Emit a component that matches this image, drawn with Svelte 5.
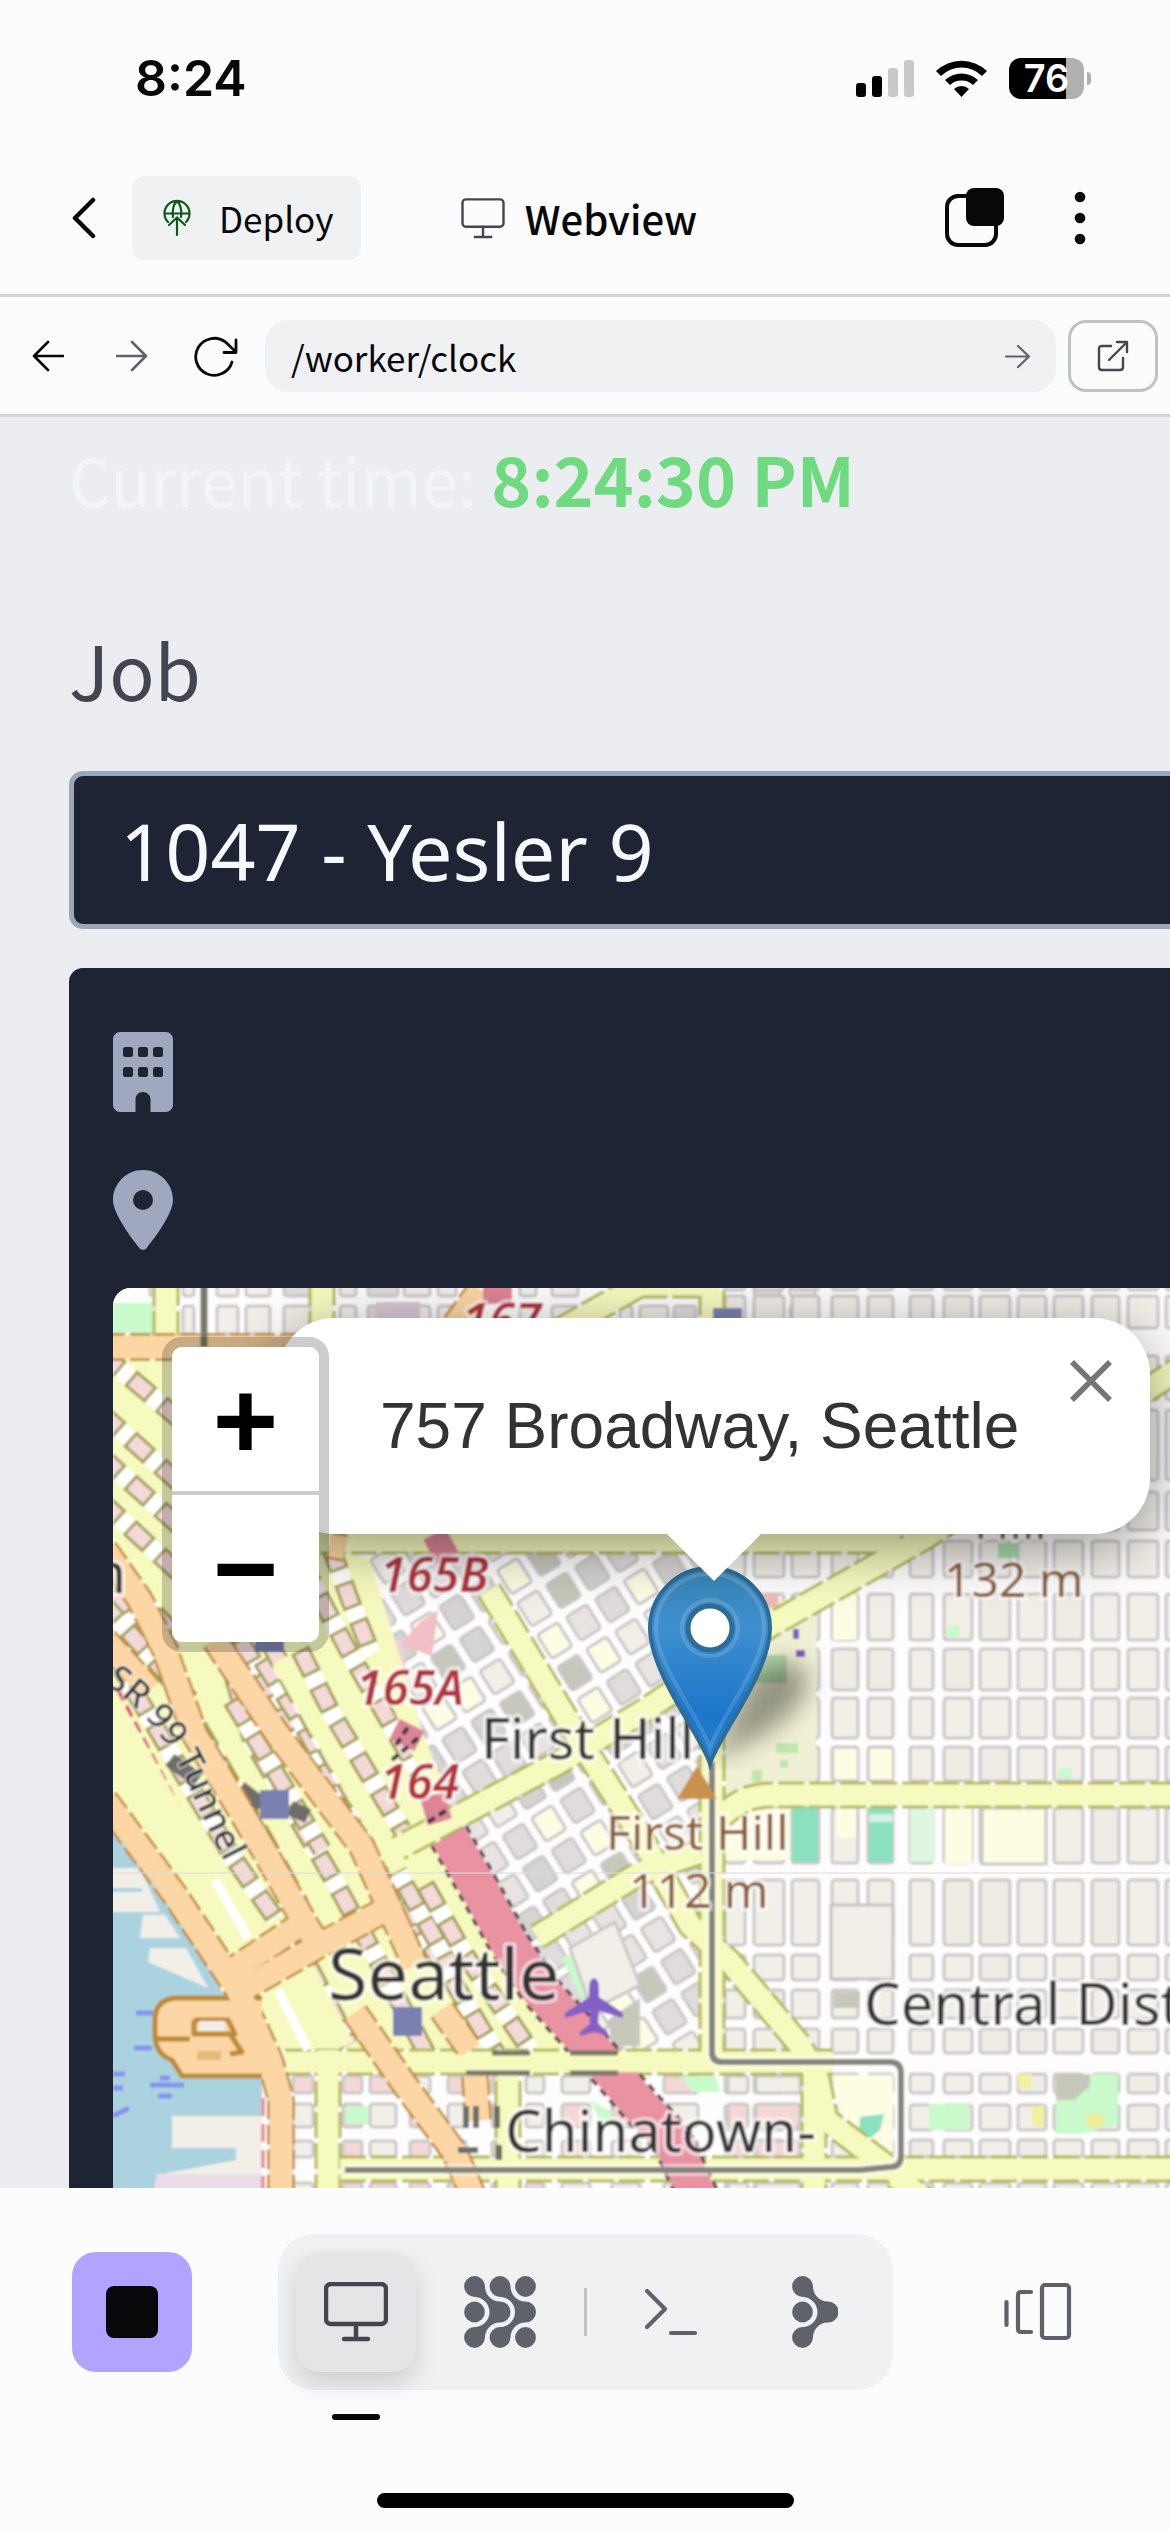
<script>
  let path = $state('/worker/clock');
  let job = $state('1047 - Yesler 9');

  let seed = 7;
  const rnd = () => {
    seed = (seed * 16807) % 2147483647;
    return seed / 2147483647;
  };

  const blockFills = ['#f2efe9', '#f2efe9', '#f2efe9', '#f2efe9', '#efebe5', '#e0dcdc'];

  // Street blocks of the eastern grid: columns and rows as [start, end].
  const cols = [
    [725, 745], [754, 784], [792, 819], [832, 858], [868, 893], [910, 933], [944, 972],
    [980, 1010], [1018, 1046], [1054, 1083], [1092, 1119], [1128, 1158], [1166, 1196]
  ];
  const rows = [
    [1276, 1290], [1296, 1328], [1356, 1400], [1410, 1480], [1492, 1530], [1541, 1577],
    [1594, 1640], [1649, 1690], [1698, 1738], [1747, 1781], [1808, 1863], [1880, 1945],
    [1955, 1980], [1990, 2018], [2029, 2053], [2074, 2093], [2105, 2130], [2140, 2157], [2183, 2200]
  ];
  const east = cols.flatMap(([x1, x2]) =>
    rows.map(([y1, y2]) => ({ x: x1, y: y1, w: x2 - x1, h: y2 - y1, fill: blockFills[Math.floor(rnd() * 5)] }))
  );

  const topCols = [[150, 156], [183, 194], [217, 238], [246, 270], [284, 312], [340, 356], [368, 398], [404, 430], [438, 456], [520, 536], [552, 578], [620, 632], [640, 668], [674, 696], [754, 780], [790, 815]];
  const northWest = topCols.flatMap(([x1, x2]) =>
    [[1280, 1296], [1306, 1334]].map(([y1, y2]) => ({ x: x1, y: y1, w: x2 - x1, h: y2 - y1, fill: blockFills[Math.floor(rnd() * 6)] }))
  );

  const southCols = [[293, 313], [343, 362], [370, 396], [410, 430], [448, 466], [492, 506], [526, 544], [562, 590], [612, 640], [664, 698], [728, 748], [756, 800]];
  const southWest = southCols.flatMap(([x1, x2]) =>
    [[2076, 2093], [2104, 2127], [2141, 2157], [2183, 2200]].map(([y1, y2]) => ({
      x: x1, y: y1, w: x2 - x1, h: y2 - y1, fill: rnd() > 0.55 ? '#f4d7d7' : '#f2efe9'
    }))
  );

  // First Hill blocks, turned to follow the diagonal streets.
  const hill = [];
  for (let i = -9; i < 14; i++) {
    for (let j = -13; j < 14; j++) {
      hill.push({ x: i * 34, y: j * 38, w: 24, h: 28, fill: ['#f2efe9', '#e0dcdc', '#e0dcdc', '#d6d3d3', '#e9e4e1', '#fdfde4', '#c8c7bb'][Math.floor(rnd() * 7)] });
    }
  }

  // Rows of small downtown blocks between the avenues.
  const lanes = [
    'M113 1590 L176 1690 L262 1836 L300 1905',
    'M113 1655 L230 1853 L275 1918',
    'M200 1560 L252 1740 L336 1884 L372 1950 L430 2060',
    'M225 1560 L240 1640 L386 1880 L440 1960 L500 2060',
    'M262 1660 L300 1720 L362 1830 L420 1925',
    'M300 1650 L330 1710 L402 1830',
    'M300 1560 L348 1650 L420 1775',
    'M330 1545 L350 1600 L372 1655',
    'M268 1640 L322 1740 L402 1880 L450 1965',
    'M232 1700 L322 1850',
    'M308 1965 L350 2045',
    'M425 1885 L462 1950 L530 2050'
  ];
  const lanesNorth = [
    'M100 1352 L180 1420', 'M100 1412 L180 1484', 'M100 1455 L180 1527',
    'M100 1500 L180 1574', 'M100 1555 L180 1640', 'M100 1600 L190 1700'
  ];
  const yellow = [
    'M380 1858 L400 1847 L558 1763 L650 1707 L771 1625 L926 1537 L1180 1368',
    'M489 1590 L582 1744 L640 1835 L690 1925 L730 1962 L800 2045 L818 2080 L826 2120 L900 2176',
    'M320 1541 H900',
    'M712 1290 V2062',
    'M537 1937 L640 1873 L700 1852',
    'M285 2062 H833',
    'M722 1816 C740 1800 750 1795 775 1795 H1180',
    'M340 2169 H1180',
    'M328 2050 V2200',
    'M508 2050 V2200',
    'M814 2060 V2200',
    'M895 2176 L925 2200',
    'M322 1280 V1340',
    'M166 1280 V1345',
    'M560 1330 L640 1285 H720'
  ];
  const orange = [
    'M105 1347 H300',
    'M105 1550 L140 1600 L165 1650 L195 1735 L262 1847 L306 1925 L318 1945',
    'M105 1640 L150 1690',
    'M215 1640 L278 1735 L362 1847 L415 1965',
    'M105 1800 L175 1895 L238 1990 L270 2060 L281 2100 V2200',
    'M225 1975 L300 1925',
    'M236 1993 L320 1945 L385 1910',
    'M355 2013 L405 2085 L455 2153 L475 2200',
    'M442 2010 L470 2050',
    'M475 2076 L478 2120',
    'M330 1545 L345 1548',
    'M455 1325 L480 1290'
  ];
  const motorway = ['M449 1836 L477 1885 L510 1945 L540 1990 L580 2035 L640 2105 L672 2140 L700 2200'];
  const motorwayBits = ['M424 1812 L448 1805', 'M402 1745 L412 1725', 'M497 1270 V1304', 'M430 1552 L452 1540'];

  const dots = [[10.5, 10.5], [36, 10.5], [61.5, 10.5], [10.5, 36], [10.5, 61.5], [36, 61.5], [61.5, 61.5]];
</script>

{#snippet blocks(list)}
  {#each list as b}
    <rect x={b.x} y={b.y} width={b.w} height={b.h} rx="3" fill={b.fill} />
  {/each}
{/snippet}

{#snippet monitor()}
  <rect x="2" y="2" width="60" height="40" rx="5" />
  <path d="M32 42v15M20 57h24" />
{/snippet}

<div class="phone">
  <header>
    <div class="status">
      <span class="clock">8:24</span>
      <div class="signals">
        <svg width="58" height="37" viewBox="0 0 58 37" aria-hidden="true">
          <rect x="0" y="23" width="10" height="14" rx="3" />
          <rect x="16" y="16" width="10" height="21" rx="3" />
          <rect x="32" y="8" width="10" height="29" rx="3" fill="#c9c9c9" />
          <rect x="48" y="0" width="10" height="37" rx="3" fill="#c9c9c9" />
        </svg>
        <svg width="51" height="37" viewBox="0 0 51 37" aria-hidden="true">
          <path d="M0 11A37 37 0 0 1 51 11L46 16A29 29 0 0 0 5 16Z" />
          <path d="M9 20A24 24 0 0 1 42 20L37 25A17 17 0 0 0 14 25Z" />
          <path d="M18 29A11 11 0 0 1 33 29L25.500 37Z" />
        </svg>
        <div class="battery"><span>76</span></div>
      </div>
    </div>

    <div class="titlebar">
      <div class="side">
        <button class="icon back" aria-label="Back">
          <svg width="24" height="42" viewBox="0 0 24 42" fill="none" stroke="#07080a" stroke-width="4.500" stroke-linecap="round" stroke-linejoin="round"><path d="M21 3L3 21L21 39" /></svg>
        </button>
        <button class="deploy">
          <svg width="28" height="38" viewBox="0 0 28 38" fill="none" stroke="#0a5a16" stroke-width="2.200" stroke-linecap="round" stroke-linejoin="round">
            <path d="M5 23A12.500 12.500 0 1 1 23 23M1.500 14.500H26.500M10 18C9 11 11 5 14 2C17 5 19 11 18 18M14 36V19M6 26L14 18.500L22 26" />
          </svg>
          Deploy
        </button>
      </div>
      <h1>
        <svg width="44" height="41" viewBox="0 0 64 60" fill="none" stroke="#434650" stroke-width="3.500" stroke-linecap="round">{@render monitor()}</svg>
        Webview
      </h1>
      <div class="side end">
        <button class="icon" aria-label="Tabs">
          <svg width="60" height="60" viewBox="0 0 60 60"><rect x="2" y="8" width="49" height="49" rx="11" fill="none" stroke="#07080a" stroke-width="4" /><rect x="21" y="0" width="38" height="38" rx="8" fill="#07080a" /></svg>
        </button>
        <button class="icon" aria-label="More">
          <svg width="12" height="54" viewBox="0 0 12 54" fill="#07080a"><circle cx="6" cy="6" r="5.300" /><circle cx="6" cy="27" r="5.300" /><circle cx="6" cy="48" r="5.300" /></svg>
        </button>
      </div>
    </div>
  </header>

  <nav class="address">
    <button class="icon nav" aria-label="Go back">
      <svg width="32" height="32" viewBox="0 0 32 32" fill="none" stroke="#07080a" stroke-width="2.600" stroke-linecap="round" stroke-linejoin="round"><path d="M31 16H2M16 2L2 16L16 30" /></svg>
    </button>
    <button class="icon nav" aria-label="Go forward">
      <svg width="32" height="32" viewBox="0 0 32 32" fill="none" stroke="#5f626b" stroke-width="2.600" stroke-linecap="round" stroke-linejoin="round"><path d="M1 16H30M16 2L30 16L16 30" /></svg>
    </button>
    <button class="icon nav" aria-label="Reload">
      <svg width="46" height="42" viewBox="0 0 46 42" fill="none" stroke="#07080a" stroke-width="2.800" stroke-linecap="round" stroke-linejoin="round"><path d="M39 27A18.500 18.500 0 1 1 33 7.500L43 17M43 5V17.500H31" /></svg>
    </button>
    <div class="field">
      <input aria-label="Address" bind:value={path} />
      <button class="icon" aria-label="Go">
        <svg width="25" height="25" viewBox="0 0 25 25" fill="none" stroke="#5f626b" stroke-width="2.200" stroke-linecap="round" stroke-linejoin="round"><path d="M1 12.500H24M13 2L24 12.500L13 23" /></svg>
      </button>
    </div>
    <button class="external" aria-label="Open in new tab">
      <svg width="32" height="32" viewBox="0 0 32 32" fill="none" stroke="#434650" stroke-width="2.400" stroke-linecap="round" stroke-linejoin="round"><path d="M14 6H5Q2 6 2 9V27Q2 30 5 30H23Q26 30 26 27V18M12 20L30 2M20 2H30V12" /></svg>
    </button>
  </nav>

  <main>
    <p class="now">Current time: <strong>8:24:30 PM</strong></p>
    <label for="job">Job</label>
    <select id="job" bind:value={job}>
      <option>1047 - Yesler 9</option>
    </select>

    <section class="card">
      <svg class="detail" width="60" height="80" viewBox="0 0 384 512" fill="#9fa8bf" aria-hidden="true">
        <path fill-rule="evenodd" d="M48 0C21 0 0 21 0 48V464c0 27 21 48 48 48h96V432c0-27 21-48 48-48s48 21 48 48v80h96c27 0 48-21 48-48V48c0-27-21-48-48-48zM80 96h32q16 0 16 16v32q0 16-16 16H80q-16 0-16-16v-32q0-16 16-16zm96 0h32q16 0 16 16v32q0 16-16 16h-32q-16 0-16-16v-32q0-16 16-16zm96 0h32q16 0 16 16v32q0 16-16 16h-32q-16 0-16-16v-32q0-16 16-16zM80 224h32q16 0 16 16v32q0 16-16 16H80q-16 0-16-16v-32q0-16 16-16zm96 0h32q16 0 16 16v32q0 16-16 16h-32q-16 0-16-16v-32q0-16 16-16zm96 0h32q16 0 16 16v32q0 16-16 16h-32q-16 0-16-16v-32q0-16 16-16z" />
      </svg>
      <svg class="detail" width="60" height="80" viewBox="0 0 384 512" fill="#9fa8bf" aria-hidden="true">
        <path fill-rule="evenodd" d="M215.700 499.200C267 435 384 279.400 384 192C384 86 298 0 192 0S0 86 0 192c0 87.400 117 243 168.300 307.200c12.300 15.300 35.100 15.300 47.400 0zM192 128a64 64 0 1 1 0 128 64 64 0 1 1 0-128z" />
      </svg>

      <div class="map">
        <svg class="tiles" viewBox="113 1288 1057 900" preserveAspectRatio="xMinYMin slice" role="img" aria-label="Street map of Seattle">
          <defs>
            <clipPath id="hill"><path d="M330 1545H700V2050H600L430 1790L350 1600Z" /></clipPath>
            <clipPath id="downtown"><path d="M113 1340H330V1545L370 1560L450 1820L590 2050H280L113 1800Z" /></clipPath>
            <path id="tunnel" d="M104 1684C140 1706 168 1740 184 1776S214 1842 240 1892" />
            <filter id="tile" x="0" y="0" width="100%" height="100%"><feGaussianBlur stdDeviation="1.300" /></filter>
          </defs>
          <g filter="url(#tile)">
          <rect x="93" y="1268" width="1097" height="940" fill="#fdfdfd" />

          <g stroke="#cbc7c8" stroke-width="3">{@render blocks(northWest)}</g>
          <rect x="113" y="1303" width="40" height="30" fill="#c8facc" />
          <rect x="376" y="1302" width="44" height="30" fill="#d8c8d4" />
          <g stroke="#cbc7c8" stroke-width="3">{@render blocks(east)}</g>

          <g stroke="none">
            <path d="M725 1600H816V1783H760L725 1800Z" fill="#f0f0d4" />
            <path d="M755 1655h32v28h-32z" fill="#b9dcaa" />
            <path d="M776 1743h22v10h-22zM752 1770h10v12h-10zM780 1760h8v8h-8z" fill="#c0e6a8" />
            <rect x="793" y="1629" width="6" height="10" fill="#7f5cc0" />
            <rect x="796" y="1650" width="9" height="7" fill="#7f5cc0" />
            <rect x="722" y="1808" width="68" height="52" fill="#fdfde4" />
            <rect x="792" y="1806" width="26" height="56" fill="#8ae0bf" />
            <rect x="869" y="1806" width="24" height="56" fill="#8ae0bf" />
            <rect x="869" y="1814" width="24" height="8" fill="#d2f3e5" />
            <rect x="910" y="1806" width="24" height="56" fill="#dff6df" />
            <rect x="836" y="1808" width="20" height="30" fill="#fdfde4" />
            <rect x="945" y="1808" width="27" height="56" fill="#fdfde4" />
            <rect x="982" y="1808" width="64" height="56" fill="#fdfde4" stroke="#cbc7c8" stroke-width="3" />
            <rect x="833" y="1594" width="24" height="46" fill="#fdfde4" />
            <rect x="835" y="1749" width="22" height="30" fill="#fdfde4" />
            <rect x="870" y="1749" width="22" height="30" fill="#fdfde4" />
            <rect x="831" y="1905" width="62" height="74" fill="#f2efe9" stroke="#c6c1c2" stroke-width="3" />
            <path d="M832 2075H893V2162L850 2130L835 2100Z" fill="#fdfde4" />
            <path d="M860 2117L884 2114L880 2130L870 2138L859 2134Z" fill="#8ae0bf" />
            <rect x="929" y="2104" width="40" height="26" fill="#c8facc" />
            <path d="M1056 2074H1118V2124L1082 2134H1056Z" fill="#c8facc" />
            <path d="M1056 2074H1090V2086L1074 2100H1056Z" fill="#c8c7bb" />
            <rect x="1086" y="2114" width="18" height="13" fill="#eeee9a" />
            <rect x="1018" y="2074" width="13" height="14" fill="#f2f29c" />
            <rect x="1032" y="2106" width="12" height="20" fill="#f2f29c" />
            <rect x="947" y="1626" width="13" height="12" fill="#c8facc" />
            <rect x="998" y="1543" width="20" height="15" fill="#a9dcae" />
            <rect x="1058" y="1768" width="14" height="11" fill="#c8facc" />
            <rect x="834" y="1992" width="26" height="16" fill="#c8c7bb" />
            <rect x="762" y="1594" width="16" height="14" fill="#f0b9b4" />
            <rect x="678" y="1550" width="26" height="18" fill="#dfa9a4" />
          </g>

          <g clip-path="url(#hill)">
            <rect x="330" y="1540" width="390" height="520" fill="#fdfdfd" />
            <g transform="translate(560 1800) rotate(-32)" stroke="#cbc7c8" stroke-width="3">{@render blocks(hill)}</g>
          </g>
          <path d="M420 1622L438 1610L432 1656L400 1645Z" fill="#f1bfc6" />
          <path d="M375 1645L400 1640L408 1675L385 1680Z" fill="#f4d0d4" />

          <path d="M93 1770L262 2060V2210H93Z" fill="#aad3df" />
          <path d="M93 1868H140L160 1912H93ZM143 1915H165L180 1938H140ZM150 1948H186L208 1988L148 1962ZM172 2116H262V2210H157V2175L236 2160V2148H172Z" fill="#f2efe9" />
          <path d="M157 2174H262V2210H150Z" fill="#ebdbe8" />
          <path d="M93 1888H142V1892H93Z" fill="#aad3df" />
          <path d="M136 2013h18M134 2048h18M150 2085h34M158 2096h14M113 2074h12M113 2088h10M113 2116l16-8M160 2078h10" stroke="#8693ee" stroke-width="5" fill="none" />

          <g clip-path="url(#downtown)" fill="none">
            <path d="M105 1330H330V1545L370 1560L450 1820L590 2060H280L105 1800Z" fill="#f7fabf" />
            {#each [...lanes, ...lanesNorth] as d}
              <path {d} stroke="#fff" stroke-width="18" />
              <path {d} stroke="#a0a052" stroke-width="20" stroke-dasharray="27 13" />
              <path {d} stroke="#f4d9d9" stroke-width="14" stroke-dasharray="21 19" stroke-dashoffset="-3" />
            {/each}
            <path d="M118 1690L170 1790L212 1878" stroke="#e0417a" stroke-width="4" stroke-dasharray="12 6" />
            <path d="M170 1760L198 1780M240 1788L262 1805M290 1808L308 1816" stroke="#6d6d6a" stroke-width="15" />
          </g>

          <g stroke="#cbc7c8" stroke-width="3">{@render blocks(southWest)}</g>
          <rect x="346" y="2106" width="22" height="18" fill="#c8facc" />
          <path d="M680 2076H716L720 2092H692Z" fill="#c8facc" />
          <path d="M562 1958L578 1950L592 1985L582 2000Z" fill="#c8facc" />
          <path d="M590 2100L612 2112L616 2130L600 2120Z" fill="#c8facc" />
          <path d="M608 2020L640 1998V2046H612Z" fill="#c8c7bb" />
          <path d="M570 1948L615 1922L640 1985L592 2010Z" fill="#f2efe9" stroke="#cbc7c8" stroke-width="3" />

          <g fill="none" stroke-linejoin="round">
            {#each yellow as d}<path {d} stroke="#b3b75c" stroke-width="27" stroke-dasharray="26 5" />{/each}
            {#each yellow as d}<path {d} stroke="#f7fabf" stroke-width="21" />{/each}
            <path d="M105 1690L250 1950M300 1960L345 2045M280 1660L400 1870M380 1650L440 1800" stroke="#f7fabf" stroke-width="18" />
            <path d="M278 1990L308 2050M215 1880L248 1938" stroke="#fff" stroke-width="9" />

            {#each orange as d}<path {d} stroke="#bd8a35" stroke-width="28" stroke-dasharray="20 5" />{/each}
            <path d="M262 1998H175Q155 2000 155 2020V2032Q154 2054 172 2060L182 2076H262" fill="#fcd6a4" stroke="#bd8a35" stroke-width="5" />
            {#each orange as d}<path {d} stroke="#fcd6a4" stroke-width="23" />{/each}
            <path d="M194 2020H228L236 2036M194 2020V2034H230L242 2052L230 2054M155 2039H190" stroke="#bd8a35" stroke-width="5" />
            <rect x="199" y="2021" width="26" height="10" fill="#f2efe9" />
            <rect x="197" y="2051" width="24" height="9" fill="#e3bb79" />
            <path d="M263 2098V2190" stroke="#e892a2" stroke-width="4" stroke-dasharray="18 8" />

            {#each motorway as d}
              <path {d} stroke="#4a3a3e" stroke-width="43" stroke-dasharray="8 6" />
              <path {d} stroke="#e892a2" stroke-width="37" />
            {/each}
            {#each motorwayBits as d}<path {d} stroke="#dd8496" stroke-width="28" />{/each}
            <path d="M483 1287H512" stroke="#dd8496" stroke-width="30" />
            <path d="M392 1760L418 1738M428 1822L450 1808M396 1745L410 1724" stroke="#333" stroke-width="4" stroke-dasharray="8 5" />
            <path d="M520 2062H640" stroke="#f7fabf" stroke-width="20" />
            <path d="M492 2053H530M570 2053H618M466 2073H530M570 2073H618" stroke="#77776a" stroke-width="5" />
            <path d="M466 2106V2128M476 2106V2128M458 2150H478M497 2106V2128M499 2145V2160" stroke="#6d6d6a" stroke-width="6" />
            <path d="M204 1278V1347" stroke="#77776a" stroke-width="7" />
            <path d="M712 1762V2052Q712 2062 722 2062H890Q901 2062 901 2073V2156Q901 2167 890 2167L860 2170H345" stroke="#fff" stroke-opacity=".5" stroke-width="12" />
            <path d="M712 1762V2052Q712 2062 722 2062H890Q901 2062 901 2073V2156Q901 2167 890 2167L860 2170H345" stroke="#84847b" stroke-width="6" />
          </g>

          <g fill="#7a80b0">
            <rect x="260" y="1790" width="29" height="29" />
            <rect x="393" y="2007" width="29" height="29" />
            <rect x="255" y="1623" width="29" height="29" />
            <rect x="713" y="1308" width="29" height="29" />
          </g>
          <path d="M697 1766L717 1799H677Z" fill="#c8914d" />
          <path d="M594 1978Q599 1979 599 1990V1997L623 2013V2018L599 2011L598 2024L608 2032V2036L594 2032L580 2036V2032L590 2024L589 2011L565 2018V2013L589 1997V1990Q589 1979 594 1978Z" fill="#8461c4" />

          <g class="labels">
            <text x="328" y="2000" font-size="72">Seattle</text>
            <text x="505" y="2152" font-size="58">Chinatown-</text>
            <text x="864" y="2025" font-size="58">Central District</text>
            <text x="481" y="1759" font-size="56">First Hill</text>
            <text x="126" y="1593" font-size="56" text-anchor="end">n</text>
            <text class="road" font-size="36"><textPath href="#tunnel">SR 99 Tunnel</textPath></text>
            <g class="peak" font-size="48">
              <text x="606" y="1850">First Hill</text>
              <text x="629" y="1908">112 m</text>
              <text x="944" y="1597">132 m</text>
              <text x="974" y="1539">Hill</text>
            </g>
            <g class="exit" font-size="48">
              <text x="380" y="1592">165B</text>
              <text x="356" y="1705">165A</text>
              <text x="380" y="1799">164</text>
              <text x="462" y="1338">167</text>
            </g>
          </g>
          </g>
          <path d="M113 1873H1170" stroke="#dcdcdc" stroke-width="1" />
        </svg>

        <svg class="marker" width="230" height="204" viewBox="0 0 230 204" aria-hidden="true">
          <defs>
            <linearGradient id="pin" x1="0" y1="0" x2="0" y2="1"><stop offset="0" stop-color="#3b86b8" /><stop offset=".3" stop-color="#3e8fce" /><stop offset=".75" stop-color="#1c76c9" /><stop offset="1" stop-color="#2a81cb" /></linearGradient>
            <filter id="soft" x="-30%" y="-30%" width="160%" height="160%"><feGaussianBlur stdDeviation="12" /></filter>
          </defs>
          <path d="M64 196L100 116Q130 84 158 104Q166 134 122 164Z" fill="#000" opacity=".38" filter="url(#soft)" />
          <path d="M62 198C55 172 2 108 2 62A60 60 0 0 1 122 62C122 108 69 172 62 198Z" fill="url(#pin)" stroke="#2e6c97" stroke-width="4" />
          <path d="M62 182C52 152 8 98 8 62A54 54 0 0 1 116 62C116 98 72 152 62 182Z" fill="none" stroke="#fff" stroke-opacity=".14" stroke-width="4" />
          <circle cx="62" cy="62" r="28" fill="none" stroke="#fff" stroke-opacity=".14" stroke-width="4" />
          <circle cx="62" cy="62" r="22" fill="#fff" stroke="#2e6c97" stroke-width="5" />
        </svg>

        <div class="popup">
          <p>757 Broadway, Seattle</p>
          <button class="icon close" aria-label="Close popup">
            <svg width="44" height="44" viewBox="0 0 44 44" stroke="#757575" stroke-width="5.500"><path d="M3 3L41 41M41 3L3 41" /></svg>
          </button>
          <svg class="tip" width="104" height="52" viewBox="0 0 104 52" aria-hidden="true"><path d="M0 0H104L52 52Z" fill="#fff" /></svg>
        </div>

        <div class="zoom">
          <button aria-label="Zoom in">+</button>
          <button aria-label="Zoom out">−</button>
        </div>
      </div>
    </section>
  </main>

  <footer>
    <div class="dock">
      <button class="stop" aria-label="Stop"><span></span></button>
      <div class="tools">
        <button class="active" aria-label="Webview">
          <svg width="64" height="60" viewBox="0 0 64 60" fill="none" stroke="#434650" stroke-width="4.500" stroke-linecap="round">{@render monitor()}</svg>
        </button>
        <button aria-label="Apps">
          <svg width="72" height="72" viewBox="0 0 72 72" fill="#5f626b">
            {#each dots as [x, y]}<circle cx={x} cy={y} r="10.400" />{/each}
            <path d="M20.900 10C20.900 18 27 25.500 36 25.500A10.500 10.500 0 0 1 36 46.500C27 46.500 20.900 54 20.900 62L10.500 51.100C18 51.100 25.500 45 25.500 36S18 20.900 10.500 20.900Z" />
            <path d="M46.400 10C46.400 18 52.500 25.500 61.500 25.500A10.500 10.500 0 0 1 61.500 46.500C52.500 46.500 46.400 54 46.400 62L36 51.100C43.500 51.100 51 45 51 36S43.500 20.900 36 20.900Z" />
          </svg>
        </button>
        <span class="rule"></span>
        <button aria-label="Shell">
          <svg width="54" height="50" viewBox="0 0 54 50" fill="none" stroke="#5f626b" stroke-width="4.200" stroke-linecap="round" stroke-linejoin="round"><path d="M3 4L21 22L3 40M27 46H51" /></svg>
        </button>
        <button aria-label="Assistant">
          <svg width="46" height="72" viewBox="0 0 46 72" fill="#5f626b">
            <circle cx="10.500" cy="10.500" r="10.400" /><circle cx="10.500" cy="36" r="10.400" /><circle cx="10.500" cy="61.500" r="10.400" />
            <path d="M20.900 10C20.900 18 27 25.500 36 25.500A10.500 10.500 0 0 1 36 46.500C27 46.500 20.900 54 20.900 62L10.500 51.100C18 51.100 25.500 45 25.500 36S18 20.900 10.500 20.900Z" />
          </svg>
        </button>
      </div>
      <button class="icon panes" aria-label="Panes">
        <svg width="68" height="60" viewBox="0 0 68 60" fill="none" stroke="#5f626b" stroke-width="4.200" stroke-linecap="round" stroke-linejoin="round"><rect x="38" y="3" width="27" height="53" rx="3" /><path d="M27 10H17Q14 10 14 13V47Q14 50 17 50H27M2.500 20V43" /></svg>
      </button>
    </div>
    <div class="home"></div>
  </footer>
</div>

<style>
  :global(body) { background: #fcfcfc; }
  .phone {
    display: flex;
    flex-direction: column;
    min-height: 100vh;
    overflow: hidden;
    background: #fcfcfc;
    color: #07080a;
    font-family: 'Noto Sans CJK JP', 'Noto Sans', sans-serif;
  }
  button { border: 0; padding: 0; background: none; font: inherit; color: inherit; cursor: pointer; }
  svg { display: block; flex: none; }
  p, h1 { margin: 0; }
  .icon { display: flex; align-items: center; justify-content: center; }

  header { border-bottom: 3px solid #d3d5d8; }
  .status {
    display: flex;
    justify-content: space-between;
    align-items: center;
    height: 156px;
    padding: 0 86px 0 135px;
    font-family: Inter, sans-serif;
  }
  .clock { font-size: 50px; font-weight: 600; }
  .signals { display: flex; align-items: center; gap: 22px; }
  .battery {
    position: relative;
    display: flex;
    align-items: center;
    justify-content: center;
    width: 75px;
    height: 41px;
    border-radius: 12px;
    background: linear-gradient(90deg, #000 57px, #b0b0b0 57px);
    color: #fff;
    font-size: 38px;
    font-weight: 600;
    line-height: 41px;
  }
  .battery::after {
    content: '';
    position: absolute;
    right: -7px;
    top: 14px;
    width: 4px;
    height: 13px;
    border-radius: 0 6px 6px 0;
    background: #b0b0b0;
  }
  .titlebar {
    display: grid;
    grid-template-columns: 1fr auto 1fr;
    align-items: center;
    padding: 20px 84px 34px 72px;
  }
  .side { display: flex; align-items: center; gap: 36px; }
  .end { justify-content: flex-end; gap: 69px; }
  .end .icon { height: 60px; }
  .deploy {
    display: flex;
    align-items: center;
    gap: 28px;
    height: 84px;
    padding: 0 28px 0 31px;
    border-radius: 12px;
    background: #f0f1f3;
    font-size: 35px;
    line-height: 48px;
  }
  h1 { display: flex; align-items: center; gap: 20px; font-size: 40px; line-height: 48px; font-weight: 500; }

  .address {
    display: flex;
    align-items: center;
    padding: 23px 12px 22px 6px;
    border-bottom: 3px solid #d3d5d8;
  }
  .nav { width: 84px; height: 72px; }
  .field {
    display: flex;
    flex: 1;
    align-items: center;
    min-width: 0;
    height: 72px;
    box-sizing: border-box;
    margin: 0 12px 0 7px;
    padding: 0 26px;
    border-radius: 24px;
    background: #f0f1f3;
  }
  .field input {
    flex: 1;
    min-width: 0;
    height: 48px;
    border: 0;
    padding: 0;
    outline: 0;
    background: none;
    color: inherit;
    font: inherit;
    font-size: 35px;
  }
  .external {
    display: flex;
    align-items: center;
    justify-content: center;
    width: 90px;
    height: 72px;
    border: 3px solid #c0c3c4;
    border-radius: 18px;
  }

  main {
    display: flex;
    flex: 1;
    flex-direction: column;
    padding: 16px 0 0 69px;
    background: #ebedf1;
  }
  .now { color: #f3f6f9; font-size: 66px; line-height: 90px; }
  .now strong { color: #6edb80; font-size: 68px; font-weight: 700; line-height: 90px; }
  label { margin-top: 90px; color: #434650; font-size: 75px; line-height: 112px; }
  select {
    appearance: none;
    height: 158px;
    margin-top: 46px;
    padding: 0 46px;
    border: 5px solid #9ca6bb;
    border-right: 0;
    border-radius: 14px 0 0 14px;
    background: #1e2433;
    color: #f6f9fd;
    font-family: 'Noto Sans', sans-serif;
    font-size: 79px;
  }
  .card {
    display: flex;
    flex: 1;
    flex-direction: column;
    margin-top: 39px;
    padding: 64px 0 0 44px;
    border-radius: 14px 0 0 0;
    background: #1e2433;
  }
  .detail { margin-bottom: 58px; }
  .detail + .detail { margin-bottom: 38px; }
  .map {
    position: relative;
    flex: 1;
    min-height: 900px;
    overflow: hidden;
    border-radius: 18px 0 0 0;
    background: #f2efe9;
  }
  .tiles { position: absolute; inset: 0; width: 100%; height: 100%; }
  .labels { font-family: 'Noto Sans', sans-serif; fill: #333; stroke: rgba(255, 255, 255, 0.6); stroke-width: 7px; stroke-linejoin: round; paint-order: stroke; }
  .road { font-weight: 500; stroke-width: 3px; }
  .peak { fill: #8c5c34; }
  .exit { fill: #b3333f; font-style: italic; font-weight: 600; }
  .marker { position: absolute; left: 535px; top: 278px; }
  .popup {
    position: absolute;
    left: 165px;
    top: 30px;
    display: flex;
    align-items: center;
    width: 872px;
    height: 216px;
    box-sizing: border-box;
    padding: 0 102px;
    border-radius: 56px;
    background: #fff;
    box-shadow: 0 14px 60px rgba(0, 0, 0, 0.4);
    color: #333;
    font-family: 'Liberation Sans', sans-serif;
    font-size: 64px;
    white-space: nowrap;
  }
  .close { position: absolute; right: 37px; top: 41px; }
  .tip { position: absolute; left: 384px; top: 211px; }
  .zoom {
    position: absolute;
    left: 49px;
    top: 49px;
    border: 10px solid rgba(0, 0, 0, 0.2);
    border-radius: 20px;
    background-clip: padding-box;
  }
  .zoom button {
    display: block;
    width: 147px;
    height: 147px;
    background: #fff;
    color: #000;
    font: bold 112px/147px 'Liberation Sans', sans-serif;
  }
  .zoom button:first-child { height: 148px; border-bottom: 4px solid #ccc; border-radius: 10px 10px 0 0; box-sizing: border-box; }
  .zoom button:last-child { border-radius: 0 0 10px 10px; }

  footer { padding: 46px 72px 24px; }
  .dock { display: flex; align-items: center; justify-content: space-between; }
  .dock button { display: flex; align-items: center; justify-content: center; width: 120px; height: 120px; border-radius: 24px; }
  .dock .stop { background: #b1a3ff; }
  .stop span { width: 52px; height: 52px; border-radius: 8px; background: #07080a; }
  .tools { display: flex; align-items: center; gap: 24px; padding: 18px; border-radius: 36px; background: #f0f1f3; }
  .dock .active { position: relative; background: #e4e5e7; box-shadow: 0 12px 24px rgba(0, 0, 0, 0.14); }
  .active::after { content: ''; position: absolute; left: 36px; bottom: -48px; width: 48px; height: 6px; border-radius: 3px; background: #07080a; }
  .rule { width: 3px; height: 48px; background: #c0c2c6; }
  .home { width: 417px; height: 15px; margin: 103px auto 0; border-radius: 8px; background: #000; }
</style>
